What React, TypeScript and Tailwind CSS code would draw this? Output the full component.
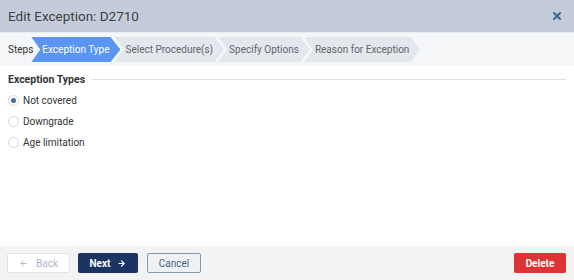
import React from 'react';
import { ArrowLeft, ArrowRight } from 'lucide-react';

const STEPS = ['Exception Type', 'Select Procedure(s)', 'Specify Options', 'Reason for Exception'];

const OPTIONS = [
  { label: 'Not covered', checked: true },
  { label: 'Downgrade', checked: false },
  { label: 'Age limitation', checked: false },
];

function Step({ label, active, first }: { label: string; active?: boolean; first?: boolean }) {
  return (
    <div
      className={`flex h-[25px] items-center pl-[11px] pr-[11px] text-[10px] ${first ? '' : '-ml-[6px]'} ${
        active ? 'bg-[#5b95f3] text-white' : 'bg-[#e3e7ee] text-[#666]'
      } [clip-path:polygon(0_0,calc(100%-10px)_0,100%_50%,calc(100%-10px)_100%,0_100%,9px_50%)]`}
    >
      {label}
    </div>
  );
}

function Radio({ checked }: { checked: boolean }) {
  return (
    <span className="flex h-[11px] w-[11px] items-center justify-center rounded-full border border-[#d3d9e0] bg-white">
      {checked && <span className="h-[5px] w-[5px] rounded-full bg-[#4a6b8c]" />}
    </span>
  );
}

export default function App() {
  return (
    <div className="flex h-[280px] w-[574px] flex-col bg-white font-['Roboto',sans-serif]">
      {/* Header */}
      <div className="flex h-[33px] items-center justify-between border-b border-[#e9edf3] bg-[#c4ccdc] pl-2 pr-[13px]">
        <span className="text-[13.5px] text-[#3f3f3f]">Edit Exception: D2710</span>
        <svg width="8" height="8" viewBox="0 0 8 8">
          <path d="M1 1 L7 7 M7 1 L1 7" stroke="#3c6a97" strokeWidth="2.2" strokeLinecap="square" />
        </svg>
      </div>

      {/* Steps */}
      <div className="flex h-[33px] items-center bg-[#f5f6f8] pl-2">
        <span className="relative z-10 -mr-[2px] text-[10px] text-[#333]">Steps</span>
        {STEPS.map((s, i) => (
          <Step key={s} label={s} active={i === 0} first={i === 0} />
        ))}
      </div>

      {/* Body */}
      <div className="flex flex-1 flex-col px-2 pt-[6px]">
        <div className="flex items-center gap-[6px]">
          <span className="text-[10.5px] font-bold text-[#333]">Exception Types</span>
          <div className="h-px flex-1 bg-[#d9e3ec]" />
        </div>
        <div className="mt-[6px] flex flex-col gap-[7px]">
          {OPTIONS.map((o) => (
            <div key={o.label} className="flex h-[14px] items-center gap-[4px]">
              <Radio checked={o.checked} />
              <span className="text-[10px] text-[#333]">{o.label}</span>
            </div>
          ))}
        </div>
      </div>

      {/* Footer */}
      <div className="flex h-[34px] items-center justify-between bg-[#f3f3f3] pl-[7px] pr-2">
        <div className="flex items-center gap-2">
          <button className="flex h-[20px] w-[63px] items-center justify-center gap-[8px] rounded-[2px] border border-[#dde5ed] bg-white text-[10px] text-[#a9b8c8]">
            <ArrowLeft size={9} strokeWidth={2.5} />
            <span>Back</span>
          </button>
          <button className="flex h-[20px] w-[60px] items-center justify-center gap-[7px] rounded-[2px] bg-[#1b3461] text-[10px] font-bold text-white">
            <span>Next</span>
            <ArrowRight size={9} strokeWidth={3} />
          </button>
          <button className="ml-[1px] flex h-[20px] w-[54px] items-center justify-center rounded-[2px] border border-[#7f9bb3] bg-[#eef2f7] text-[10px] text-[#4a6078]">
            Cancel
          </button>
        </div>
        <button className="flex h-[20px] w-[52px] items-center justify-center rounded-[2px] bg-[#dc3434] text-[10px] font-bold text-white">
          Delete
        </button>
      </div>
    </div>
  );
}
